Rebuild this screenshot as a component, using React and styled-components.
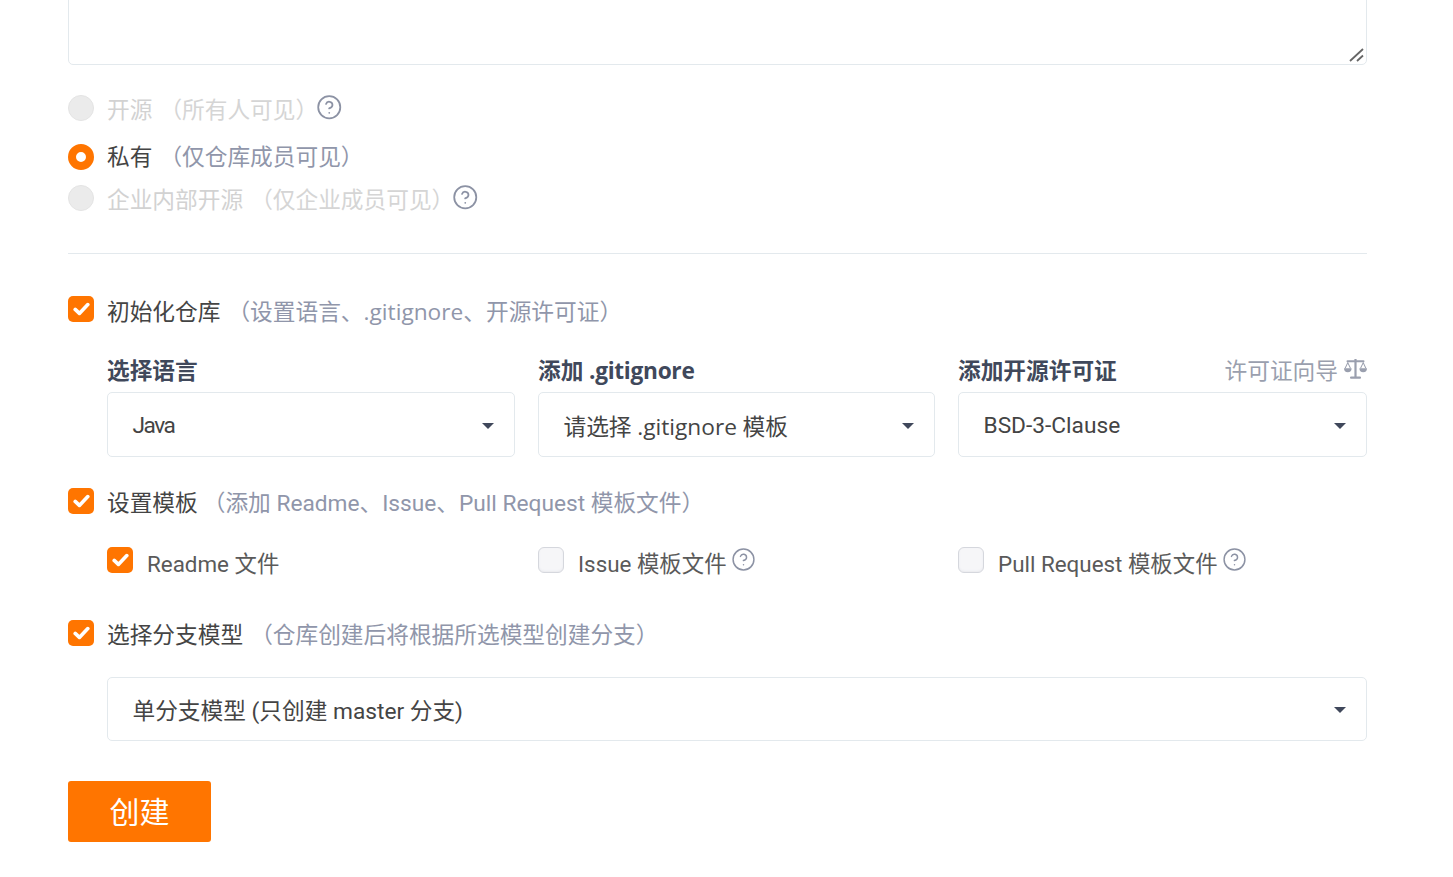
// App.jsx
import React from 'react'
import styled, { createGlobalStyle } from 'styled-components'
import { CircleHelp } from 'lucide-react'

const GlobalStyle = createGlobalStyle`
  html, body {
    margin: 0;
    padding: 0;
    height: 100%;
    overflow: hidden;
    background: #fff;
  }
  body {
    font-family: Roboto, "Noto Sans CJK SC", sans-serif;
    font-size: 22.7px;
    color: #40485b;
  }
`;

const Page = styled.form`
  display: flex;
  flex-direction: column;
  width: 1299px;
  margin-left: 68px;
`;

const DescriptionBox = styled.div`
  position: relative;
  margin-top: -100px;
`;

const Description = styled.textarea`
  display: block;
  box-sizing: border-box;
  width: 100%;
  height: 165px;
  border: 1.5px solid #e3e9ed;
  border-radius: 5px;
  background: #fff;
  outline: none;
  resize: none;
`;

const Grip = styled.svg`
  position: absolute;
  right: 2px;
  bottom: 2px;
`;

const RadioRow = styled.div`
  display: flex;
  align-items: center;
  height: 26px;
  margin-top: ${(p) => p.$top}px;
`;

const Radio = styled.span`
  box-sizing: border-box;
  flex: none;
  width: 26px;
  height: 26px;
  margin-right: 13px;
  border-radius: 50%;
  background: ${(p) => (p.$checked ? '#fff' : '#ebebeb')};
  border: ${(p) => (p.$checked ? '8.5px solid #ff7500' : '1.5px solid #e4e4e4')};
`;

const Label = styled.span`
  color: ${(p) => (p.$disabled ? '#d2d2d2' : '#444')};
  margin-left: ${(p) => p.$left ?? 0}px;
  margin-top: ${(p) => p.$drop ?? 0}px;
  white-space: nowrap;
  line-height: 30px;
`;

const Hint = styled.span`
  color: ${(p) => (p.$disabled ? '#d5d5d5' : '#9096aa')};
  margin-left: ${(p) => p.$left ?? 7}px;
  margin-top: ${(p) => p.$drop ?? 0}px;
  white-space: nowrap;
  line-height: 30px;
`;

const HelpIcon = styled(CircleHelp)`
  flex: none;
  color: #8c92a4;
  margin-left: ${(p) => p.$left ?? 0}px;
  margin-top: -2px;
`;

const Divider = styled.hr`
  width: 100%;
  height: 1px;
  margin: 42px 0 0;
  border: 0;
  background: #e3e9ed;
`;

const CheckRow = styled.div`
  display: flex;
  align-items: center;
  height: 26px;
  margin-top: ${(p) => p.$top}px;
`;

const CheckBox = styled.span`
  box-sizing: border-box;
  flex: none;
  display: flex;
  align-items: center;
  justify-content: center;
  width: 26px;
  height: 26px;
  border-radius: ${(p) => (p.$checked ? 5 : 6)}px;
  background: ${(p) => (p.$checked ? '#ff7500' : '#f6f6f8')};
  border: ${(p) => (p.$checked ? '0' : '1.5px solid #d5d7dd')};
  box-shadow: ${(p) => (p.$checked ? 'none' : 'inset 0 -1px 2px #e9eaee')};
`;

const Nested = styled.div`
  margin-left: 39px;
  display: grid;
  grid-template-columns: 408px 397px 409px;
  column-gap: 23px;
  margin-top: ${(p) => p.$top}px;
`;

const FieldHead = styled.div`
  display: flex;
  justify-content: space-between;
  align-items: center;
  height: 26px;
  margin-bottom: 10px;
`;

const FieldTitle = styled.span`
  font-weight: 700;
  color: #40485b;
  white-space: nowrap;
`;

const Token = styled.span`
  font-family: "Open Sans", sans-serif;
  letter-spacing: ${(p) => p.$spacing ?? 0}px;
`;

const Tight = styled.span`
  letter-spacing: -1.5px;
`;

const GuideLink = styled.a`
  display: flex;
  align-items: center;
  gap: 6px;
  color: #9a9fae;
  white-space: nowrap;
`;

const Select = styled.div`
  box-sizing: border-box;
  display: flex;
  align-items: center;
  justify-content: space-between;
  height: ${(p) => p.$height ?? 65}px;
  padding: ${(p) => p.$nudge ?? 2}px 20px 0 24.5px;
  border: 1.5px solid #e3e9ed;
  border-radius: 5px;
  background: #fff;
  color: #444;
  white-space: nowrap;
`;

const Caret = styled.i`
  width: 0;
  height: 0;
  border-left: 6.5px solid transparent;
  border-right: 6.5px solid transparent;
  border-top: 6.5px solid #40485b;
`;

const SubOption = styled.div`
  display: flex;
  align-items: center;
  height: 26px;
`;

const SubLabel = styled.span`
  margin-left: 14px;
  margin-top: 7px;
  font-size: 22.4px;
  color: #5a5a5a;
  white-space: nowrap;
  line-height: 30px;
`;

const BranchSelect = styled.div`
  margin: 31px 0 0 39px;
`;

const SubmitButton = styled.button`
  width: 143px;
  height: 61px;
  margin-top: 40px;
  padding: 3px 0 0;
  border: 0;
  border-radius: 3px;
  background: #ff7500;
  color: #fff;
  font-family: inherit;
  font-size: 30px;
  line-height: 58px;
`;

const Tick = () => (
  <svg width="17" height="14" viewBox="0 0 17 14" fill="none">
    <path d="M2.2 7.4 L6.4 11.4 L14.8 2.6" stroke="#fff" strokeWidth="3.6" strokeLinecap="round" strokeLinejoin="round" />
  </svg>
)

const Check = ({ checked }) => (
  <CheckBox $checked={checked}>{checked && <Tick />}</CheckBox>
)

const ScaleIcon = () => (
  <svg width="23" height="22" viewBox="0 0 23 22" fill="#9a9fae">
    <rect x="10.4" y="1" width="2.2" height="18" />
    <rect x="2.5" y="2.2" width="18" height="2" rx="1" />
    <rect x="6" y="18.6" width="11" height="2.2" rx="1" />
    <path d="M0 10.2 h7.6 a3.8 4 0 0 1 -7.6 0 z" />
    <path d="M15.4 10.2 h7.6 a3.8 4 0 0 1 -7.6 0 z" />
    <path d="M3.8 3.4 L0.6 10.2 h1.1 L3.8 5.8 L5.9 10.2 h1.1 z" />
    <path d="M19.2 3.4 L16 10.2 h1.1 L19.2 5.8 L21.3 10.2 h1.1 z" />
  </svg>
)

const App = () => {
  return (
    <>
      <GlobalStyle />
      <Page>
        <DescriptionBox>
          <Description />
          <Grip width="16" height="16" viewBox="0 0 16 16" fill="none">
            <path d="M1 14 L14 2 M8 14 L14 8.5" stroke="#666" strokeWidth="1.8" />
          </Grip>
        </DescriptionBox>

        <RadioRow $top={30}>
          <Radio />
          <Label $disabled $drop={5}>开源</Label>
          <Hint $disabled $drop={5}>（所有人可见）</Hint>
          <HelpIcon size={26.5} strokeWidth={1.6} $left={-2} />
        </RadioRow>
        <RadioRow $top={23}>
          <Radio $checked />
          <Label $drop={2}>私有</Label>
          <Hint $drop={2}>（仅仓库成员可见）</Hint>
        </RadioRow>
        <RadioRow $top={15}>
          <Radio />
          <Label $disabled $drop={5}>企业内部开源</Label>
          <Hint $disabled $drop={5}>（仅企业成员可见）</Hint>
          <HelpIcon size={26.5} strokeWidth={1.6} $left={-2} />
        </RadioRow>

        <Divider />

        <CheckRow $top={42}>
          <Check checked />
          <Label $left={13} $drop={7}>初始化仓库</Label>
          <Hint $drop={7}>（设置语言、<Token>.gitignore</Token>、开源许可证）</Hint>
        </CheckRow>

        <Nested $top={34}>
          <div>
            <FieldHead><FieldTitle>选择语言</FieldTitle></FieldHead>
            <Select><Tight>Java</Tight><Caret /></Select>
          </div>
          <div>
            <FieldHead><FieldTitle>添加 <Token $spacing={-0.3}>.gitignore</Token></FieldTitle></FieldHead>
            <Select><span>请选择 <Token>.gitignore</Token> 模板</span><Caret /></Select>
          </div>
          <div>
            <FieldHead>
              <FieldTitle>添加开源许可证</FieldTitle>
              <GuideLink>许可证向导<ScaleIcon /></GuideLink>
            </FieldHead>
            <Select>BSD-3-Clause<Caret /></Select>
          </div>
        </Nested>

        <CheckRow $top={31}>
          <Check checked />
          <Label $left={13} $drop={6}>设置模板</Label>
          <Hint $left={5} $drop={6}>（添加 Readme、Issue、Pull Request 模板文件）</Hint>
        </CheckRow>

        <Nested $top={33}>
          <SubOption>
            <Check checked />
            <SubLabel>Readme 文件</SubLabel>
          </SubOption>
          <SubOption>
            <Check />
            <SubLabel>Issue 模板文件</SubLabel>
            <HelpIcon size={25} strokeWidth={1.4} $left={4} />
          </SubOption>
          <SubOption>
            <Check />
            <SubLabel>Pull Request 模板文件</SubLabel>
            <HelpIcon size={25} strokeWidth={1.4} $left={4} />
          </SubOption>
        </Nested>

        <CheckRow $top={47}>
          <Check checked />
          <Label $left={13} $drop={6}>选择分支模型</Label>
          <Hint $drop={6}>（仓库创建后将根据所选模型创建分支）</Hint>
        </CheckRow>

        <BranchSelect>
          <Select $height={64} $nudge={1}>单分支模型 (只创建 master 分支)<Caret /></Select>
        </BranchSelect>

        <div>
          <SubmitButton type="button">创建</SubmitButton>
        </div>
      </Page>
    </>
  )
}

export default App
